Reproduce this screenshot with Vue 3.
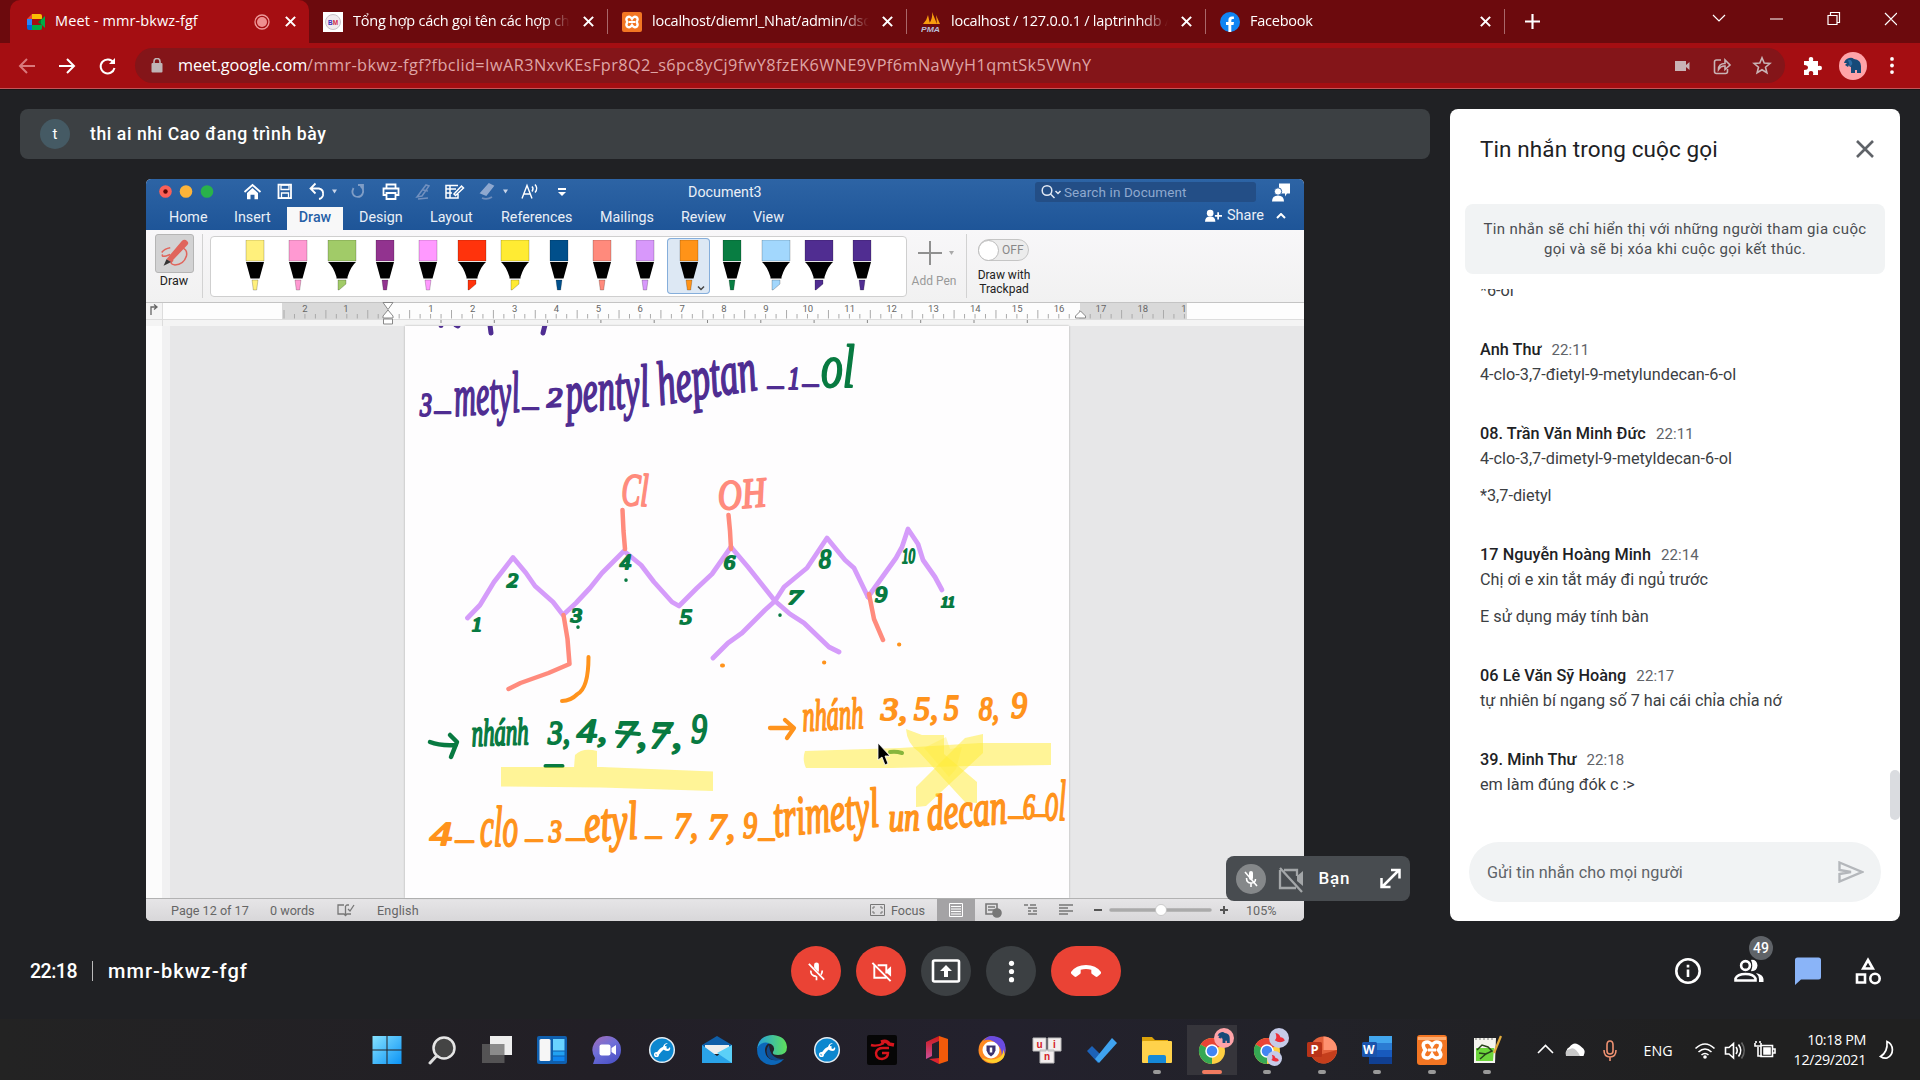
<script setup>
const tabs = [
  { title: 'Tổng hợp cách gọi tên các hợp chất', icon: 'book' },
  { title: 'localhost/diemrl_Nhat/admin/dsd', icon: 'xampp' },
  { title: 'localhost / 127.0.0.1 / laptrinhdb /', icon: 'pma' },
  { title: 'Facebook', icon: 'fb' },
]
const wordTabs = [
  ['Home', 65], ['Insert', 65], ['Draw', 60], ['Design', 71], ['Layout', 71],
  ['References', 99], ['Mailings', 81], ['Review', 72], ['View', 60],
]
const pens = [
  ['#fff07c', 0], ['#ff99d2', 0], ['#a1cb68', 1], ['#92338f', 0], ['#ff99ff', 0],
  ['#ff330c', 1], ['#ffeb33', 1], ['#004f8b', 0], ['#ff8a7c', 0], ['#d898fb', 0],
  ['#ff9318', 0], ['#087d42', 0], ['#a2d7fd', 1], ['#502d91', 1], ['#502d91', 0],
]
const rulerMarks = []
for (let i = 1; i <= 18; i++) rulerMarks.push({ n: i, x: 389 + i * 41.88 })
const ticks = []
for (let i = 0; i < 87; i++) ticks.push({ x: 284 + i * 10.47, big: i % 4 === 0 })
const lowTicks = []
for (let i = 0; i < 12; i++) lowTicks.push(441 + i * 53.3)
const messages = [
  { who: 'Anh Thư', at: '22:11', lines: ['4-clo-3,7-đietyl-9-metylundecan-6-ol'] },
  { who: '08. Trần Văn Minh Đức', at: '22:11', lines: ['4-clo-3,7-dimetyl-9-metyldecan-6-ol', '*3,7-dietyl'] },
  { who: '17 Nguyễn Hoàng Minh', at: '22:14', lines: ['Chị ơi e xin tắt máy đi ngủ trước', 'E sử dụng máy tính bàn'] },
  { who: '06 Lê Văn Sỹ Hoàng', at: '22:17', lines: ['tự nhiên bí ngang số 7 hai cái chỉa chỉa nớ'] },
  { who: '39. Minh Thư', at: '22:18', lines: ['em làm đúng đók c :>'] },
]
/* ink words: text, x, baseline, width, size, angle, colour */
const P = '#4f2d92', G = '#087a41', O = '#ff931c', S = '#ff8b7d'
const ink = [
  ['3', 420, 416, 12, 33, 0, P], ['–', 435, 419, 15, 26, 0, P],
  ['metyl', 455, 416, 66, 58, -4, P], ['–', 523, 415, 15, 26, 0, P],
  ['2', 547, 407, 16, 27, -3, P], ['pentyl', 567, 413, 84, 60, -5, P],
  ['heptan', 660, 405, 100, 62, -9, P], ['–', 768, 394, 15, 26, 0, P],
  ['1', 788, 389, 12, 32, 0, P], ['–', 803, 392, 15, 26, 0, P],
  ['ol', 821, 387, 34, 62, 0, G],
  ['Cl', 621, 505, 27, 46, 2, S], ['OH', 719, 510, 48, 42, -5, S],
  ['1', 472, 631, 10, 19, 0, G], ['2', 507, 587, 11, 19, 0, G], ['3', 571, 622, 11, 18, 0, G],
  ['4', 620, 569, 11, 20, 0, G], ['5', 680, 624, 12, 20, 0, G], ['6', 724, 569, 11, 19, 0, G],
  ['7', 788, 604, 14, 18, 0, G], ['8', 819, 568, 12, 28, 0, G], ['9', 875, 602, 12, 23, 0, G],
  ['10', 902, 563, 13, 22, 0, G], ['11', 941, 607, 14, 15, 0, G],
  ['nhánh', 472, 746, 57, 38, -2, G], ['3,', 548, 744, 22, 33, 0, G], ['4,', 577, 742, 30, 33, 0, G],
  ['7,', 615, 747, 32, 38, 0, G], ['7,', 650, 748, 32, 38, 0, G], ['9', 691, 743, 16, 42, 0, G],
  ['nhánh', 803, 731, 61, 44, -3, O], ['3,', 881, 720, 26, 31, 0, O], ['5,', 914, 720, 24, 34, 0, O],
  ['5', 944, 720, 15, 35, 0, O], ['8,', 979, 720, 20, 33, 0, O], ['9', 1011, 718, 16, 38, 0, O],
  ['4', 430, 845, 22, 34, 0, O], ['–', 456, 848, 17, 26, 0, O], ['clo', 480, 846, 38, 58, 0, O],
  ['–', 526, 847, 16, 26, 0, O], ['3', 549, 842, 13, 31, 0, O], ['–', 567, 846, 17, 26, 0, O],
  ['etyl', 585, 842, 54, 54, -4, O], ['–', 646, 844, 15, 26, 0, O],
  ['7,', 674, 838, 24, 36, 0, O], ['7,', 708, 839, 27, 36, 0, O], ['9', 743, 838, 14, 38, 0, O],
  ['–', 759, 846, 15, 26, 0, O], ['trimetyl', 775, 837, 106, 56, -6, O],
  ['un', 889, 831, 31, 40, -2, O], ['decan', 928, 830, 80, 50, -5, O],
  ['–', 1009, 824, 14, 26, 0, O], ['6', 1023, 819, 12, 35, 0, O], ['–', 1034, 822, 12, 26, 0, O],
  ['ol', 1045, 820, 21, 56, 0, O],
]
</script>

<template>
  <div class="screen">
    <header class="chrome">
      <div class="tabstrip">
        <div class="tab active">
          <svg class="fav" viewBox="0 0 20 20"><path d="M1 7l5-5v5z" fill="#ea4335"/><path d="M6 2h8q2 0 2 2v3H6z" fill="#fbbc04"/><path d="M1 7h5v6H1z" fill="#2684fc"/><path d="M1 13h5v5H3q-2 0-2-2z" fill="#0066da"/><path d="M6 13h10v3q0 2-2 2H6z" fill="#00ac47"/><path d="M12 10l4-3.500v7z" fill="#00832d"/><path d="M15 8l4-4v12l-4-4z" fill="#00ac47"/></svg>
          <span class="ttl first">Meet - mmr-bkwz-fgf</span>
          <svg class="rec" viewBox="0 0 16 16"><circle cx="8" cy="8" r="7" fill="none" stroke="#ee9a9a" stroke-width="1.3"/><circle cx="8" cy="8" r="5" fill="#ee8f90"/></svg>
          <svg class="cls" viewBox="0 0 10 10"><path d="M.8.8l8.4 8.4M9.2.8L.8 9.200" stroke="#fff" stroke-width="1.9"/></svg>
        </div>
        <div v-for="(t, i) in tabs" :key="i" class="tab idle">
          <svg v-if="t.icon === 'book'" class="fav" viewBox="0 0 20 20"><path fill="#fff" d="M0 0h20v20H0z"/><circle cx="10" cy="10" r="7.500" fill="#f1ebee" stroke="#c9c1c8"/><text x="5" y="12.500" font-size="7" font-weight="700" fill="#3b2bbd" font-family="Liberation Sans, sans-serif" textLength="10" lengthAdjust="spacingAndGlyphs">B<tspan fill="#d2264c">M</tspan></text></svg>
          <svg v-else-if="t.icon === 'xampp'" class="fav" viewBox="0 0 20 20"><rect width="20" height="20" rx="2" fill="#f37623"/><path d="M5 5.500q3-2 5 1.500 2-3.500 5-1.500 1.500 2-.5 4.500 2 2.500.5 4.500-3 2-5-1.500-2 3.500-5 1.500-1.500-2 .5-4.500-2-2.500-.5-4.500z" fill="none" stroke="#fff" stroke-width="2.300"/><path d="M7 10h6" stroke="#fff" stroke-width="2"/></svg>
          <svg v-else-if="t.icon === 'pma'" class="fav" viewBox="0 0 20 20"><path d="M2 12Q6 8 7 3l2 9zM8 12Q12 6 11 0l5 12zM15 3l4 9h-3z" fill="#f89c0e"/><text x="0" y="19.500" font-size="8" font-weight="700" font-style="italic" fill="#b8bdd8" font-family="Liberation Sans, sans-serif" textLength="19" lengthAdjust="spacingAndGlyphs">PMA</text></svg>
          <svg v-else class="fav" viewBox="0 0 20 20"><circle cx="10" cy="10" r="10" fill="#1184f2"/><path d="M8.400 20v-7H6v-3h2.400V8q0-3.600 3.500-3.600l2 .2v2.500h-1.200q-1.400 0-1.400 1.400V10H14l-.5 3h-2.200v7z" fill="#fff"/></svg>
          <span class="ttl">{{ t.title }}</span>
          <svg class="cls" viewBox="0 0 10 10"><path d="M.8.8l8.400 8.400M9.200.8L.8 9.200" stroke="#fff" stroke-width="1.900"/></svg>
          <i class="tsep"></i>
        </div>
        <svg class="plus" viewBox="0 0 14 14"><path d="M7 0v14M0 7h14" stroke="#fff" stroke-width="2"/></svg>
        <svg class="wctl" viewBox="0 0 190 30" fill="none" stroke="#fff" stroke-width="1.200"><path d="M6 12l6 6 6-6M63 16h13M121 12.500h9v9h-9zM123.500 12v-2.500h9v10H130M178 10l12 12M190 10l-12 12"/></svg>
      </div>
      <div class="toolbar">
        <svg class="nav" viewBox="0 0 120 24" fill="none" stroke-width="2"><path d="M25 12H10M17 5l-7 7 7 7" stroke="#d9797c"/><path d="M49 12h15M57 5l7 7-7 7" stroke="#fff"/><path d="M103.500 8.500A7 7 0 1 0 104.500 14" stroke="#fff"/><path d="M105 4v6h-6z" fill="#fff"/></svg>
        <div class="omni">
          <svg class="lock" viewBox="0 0 12 15"><rect x=".5" y="5" width="11" height="9.500" rx="1" fill="#c0b4b6"/><path d="M3 6V3.500a3 3 0 0 1 6 0V6" fill="none" stroke="#c0b4b6" stroke-width="1.600"/></svg>
          <span class="url"><b>meet.google.com</b>/mmr-bkwz-fgf?fbclid=IwAR3NxvKEsFpr8Q2_s6pc8yCj9fwY8fzEK6WNE9VPf6mNaWyH1qmtSk5VWnY</span>
          <svg class="omico" viewBox="0 0 110 24"><path d="M4 7h11v10H4zM15 11l3.500-3v8L15 13z" fill="#c9b3b5"/><g fill="none" stroke="#c9b3b5" stroke-width="1.600"><path d="M50 6h-4.500q-2 0-2 2v9.500q0 2 2 2h9q2 0 2-2V15"/><path d="M47.500 15.500q0-6 6.500-6V6l5 5-5 4.500V12q-4-.5-6.500 3.500z"/><path d="M91 3.800l2.200 5.300 5.700.4-4.400 3.700 1.400 5.600-4.900-3-4.900 3 1.400-5.600-4.400-3.700 5.700-.4z"/></g></svg>
        </div>
        <svg class="ext" viewBox="0 0 20 20"><path d="M2 5h5q-1-4 2-4t2 4h5v5q4-1 4 2t-4 2v5h-5q1-4-2-4t-2 4H2v-5q4 0 4-2.500T2 9z" fill="#fff"/></svg>
        <svg class="ava" viewBox="0 0 28 28"><circle cx="14" cy="14" r="14" fill="#ffa3a8"/><path d="M5 11q1-4 5-5 3-1 5 1 7 1 7 7v7h-4v-3h-2v3h-4v-6q-2 0-2-2l-1 2-3-2 2-2z" fill="#164a78"/><path d="M9 8q3-1 4 2t-2 4" fill="#2a6ca3"/></svg>
        <svg class="dots" viewBox="0 0 4 18" fill="#fff"><circle cx="2" cy="2" r="2"/><circle cx="2" cy="9" r="2"/><circle cx="2" cy="16" r="2"/></svg>
      </div>
    </header>

    <main class="meet">
      <section class="stage">
        <div class="presenting"><span class="who">t</span><span>thi ai nhi Cao đang trình bày</span></div>
        <div class="shared">
          <div class="wtop">
            <div class="wtitle">
              <svg class="quick" viewBox="146 179 460 26">
                <circle cx="165.500" cy="191.500" r="6.300" fill="#fb6058"/><circle cx="165.500" cy="191.500" r="2.200" fill="#5c0805"/><circle cx="186" cy="191.500" r="6.300" fill="#fdb43a"/><circle cx="207" cy="191.500" r="6.300" fill="#29b24b"/>
                <g fill="none" stroke="#fff" stroke-width="1.800">
                  <path d="M244.500 192l8-7 8 7"/><path d="M247 193l5.500-5 5.500 5v6.200h-3.500v-4.500h-4v4.500H247z" fill="#fff" stroke="none"/>
                  <path d="M278.500 184.700h12.500v13.500h-12.500z"/><path d="M281 185h8v4.500h-8zM281.500 193h7v5h-7z" stroke-width="1.300"/>
                  <path d="M315.500 183.500l-5 5 5 5M311 188.500h8q5 1 4 7-1 3-4 3.500"/>
                  <path d="M353.500 188q-3 6 2 8.500 5 1.500 7-2.500 2-5-2-8M358 185h5v5" stroke="#7f9dc6"/>
                  <path d="M386.500 188.500v-4h9v4M386 195h-2.500v-6.500h15v6.500H396M386.500 193h9v6h-9z"/>
                  <path d="M417 197l9-12 3 1-7 10zM418 199l10-1M423 190l5 1" stroke="#7190bf" stroke-width="1.500"/>
                  <path d="M458 185.500h-12V198h12v-4M446 189h10M446 193h6M450 186v12M454 194l7.500-8 2 2-8 7.500z" stroke-width="1.500"/>
                  <path d="M481 193l8-9 4 2-7 9z" fill="#8fa8cf" stroke="#8fa8cf"/><path d="M482 198q5 2 10-1" stroke="#6f8dbb"/>
                  <path d="M522 198.500l5-13 5 13M524 194h6.500M532 186.500q2 2 0 5M535 184.500q3.500 4 0 8" stroke-width="1.400"/>
                  <path d="M558 189h8" />
                </g>
                <path d="M332 189.500h5l-2.500 4zM503 189.500h5l-2.500 4z" fill="#c8d5ea"/><path d="M558 192h8l-4 4z" fill="#fff"/>
              </svg>
              <span class="docname">Document3</span>
              <div class="search"><svg viewBox="0 0 22 16" fill="none" stroke="#e2e9f4" stroke-width="1.500"><circle cx="7" cy="6.500" r="4.800"/><path d="M10.500 10l4 4M15.500 7l2.500 2.500L20.500 7"/></svg><span>Search in Document</span></div>
              <svg class="person" viewBox="0 0 18 18" fill="#fff"><path d="M7 0h11v10h-3l-2 3v-3H7z"/><circle cx="6" cy="8" r="3.700" stroke="#2b61a3"/><path d="M0 18q0-6 6-6t6 6z"/></svg>
            </div>
            <nav class="wtabs">
              <span v-for="w in wordTabs" :key="w[0]" :class="{ on: w[0] === 'Draw' }" :style="{ width: w[1] + 'px' }"><em>{{ w[0] }}</em></span>
              <div class="share"><svg viewBox="0 0 18 14" fill="#fff"><circle cx="5.500" cy="4" r="3.500"/><path d="M0 13q0-5.500 5.500-5.500T11 13zM13 3h1.800v3H18v1.800h-3.200v3H13v-3h-2.500V6H13z"/></svg><span>Share</span><svg class="up" viewBox="0 0 10 6"><path d="M1 5l4-4 4 4" fill="none" stroke="#fff" stroke-width="2"/></svg></div>
            </nav>
          </div>
          <div class="ribbon">
            <div class="drawtool"><div class="drawbtn"><svg viewBox="0 0 39 38"><path d="M6 18q3-4 9-5M25 12q9 2 7 10-3 9-12 9-7-1-2-5M7 20q-2 4 8 0" fill="none" stroke="#e0655c" stroke-width="1.600"/><path d="M11 25L27 6q3-3 6 0 2 2 0 4L16 28z" fill="#e0655c"/><path d="M11 25l5 3-8 4z" fill="#333"/></svg></div><span>Draw</span></div>
            <i class="rsep"></i>
            <div class="penbox">
              <div v-for="(p, i) in pens" :key="i" class="pen" :class="{ sel: i === 10 }">
                <svg viewBox="-20 0 40 52">
                  <template v-if="p[1]"><path d="M-14 0h28v21h-28z" :fill="p[0]" stroke="#0003"/><path d="M-14 22h28q-5 4-8.500 15v1.500h-11V37q-3.500-11-8.500-15z"/><path d="M-4 40h8v4l-7 6H-4z" :fill="p[0]" stroke="#0004" stroke-width=".8"/></template>
                  <template v-else><path d="M-9 0H9v21H-9z" :fill="p[0]" stroke="#0003"/><path d="M-9 22H9L4.500 38.500h-9z"/><path d="M-3 40h6L1.700 50h-3.400z" :fill="p[0]" stroke="#0004" stroke-width=".8"/></template>
                  <path v-if="i === 10" d="M9 46.500l3 3 3-3" fill="none" stroke="#444" stroke-width="1.500"/>
                </svg>
              </div>
            </div>
            <div class="addpen"><svg viewBox="0 0 46 26"><path d="M19 1v24M7 13h24" stroke="#909090" stroke-width="2"/><path d="M38 11h5l-2.500 4z" fill="#aaa"/></svg><span>Add Pen</span></div>
            <i class="rsep two"></i>
            <div class="track"><div class="toggle"><b></b><span>OFF</span></div><p>Draw with<br>Trackpad</p></div>
          </div>
          <svg class="ruler" viewBox="146 302 1158 24">
            <path d="M146 302h1158v24H146z" fill="#f4f4f4"/><path d="M162 303h1142v16.500H162z" fill="#fdfdfd"/>
            <path d="M282 303h106v16H282zM1080 303h107v16H1080z" fill="#d9d9d9"/><path d="M146 302.500h1158" stroke="#c4c4c4"/><path d="M146 319.500h1158M162.500 303v23" stroke="#ddd"/>
            <path v-for="(t, i) in ticks" :key="i" :d="`M${t.x} ${t.big ? 310 : 314}V318.500`" stroke="#aaa"/>
            <path v-for="x in lowTicks" :key="x" :d="`M${x} 320v3`" stroke="#888"/>
            <g font-family="Roboto, sans-serif" font-size="9.500" fill="#666" text-anchor="middle"><text x="305" y="311.500">2</text><text x="346" y="311.500">1</text><text v-for="m in rulerMarks" :key="m.n" :x="m.x" y="311.500">{{ m.n }}</text><text x="1184" y="311.500">1</text></g>
            <path d="M151 315v-8h6M154 304.500l3 2.500-3 2.500" fill="none" stroke="#666" stroke-width="1.300"/>
            <path d="M383 302.500h10l-5 7zM383 318v-2l5-6 5 6v2zM383.500 319h9v5h-9zM1075.500 316l5-5 5 5v2h-10z" fill="#fff" stroke="#888"/>
          </svg>
          <div class="canvas">
            <div class="margin"></div>
            <svg class="page" viewBox="405 326 664 572">
              <g fill="none" stroke-linecap="round" stroke-linejoin="round">
                <g stroke="#4f2d92" stroke-width="5"><path d="M441 325v.5M456 325l2 1M490 325l1 8M545 325l-2 8"/></g>
                <g stroke="#d59cfa" stroke-width="4.800">
                  <path d="M467.500 618L480 605 494 582 513 557.500 526 573 535 586 553 602 563 615 576 603 590 588 602 573 624 551 641 565 654 582 672 602 679 606 697 588 712 574 731 547"/>
                  <path d="M731 547l17 20 27 34 9-14 23-19 20-30 18 22 9 8 14 29"/><path d="M868 597l28-39 6-11 6-18 10 15 5 16 12 17 7 13"/>
                  <path d="M775 601l-10 9-23 23-14 10-15 15M775 601l15 13 14 9 25 24 10 5"/>
                </g>
                <g stroke="#ff8b7d" stroke-width="4.500"><path d="M563.500 615l4 24 2 25-21 9-28 10-12 6M622.500 510l1 21 1.500 18M728.500 515l1.500 16 1 18M869 594l5 25 9 21"/></g>
                <path d="M588.500 657q0 31-11 37-7 7-15.500 7" stroke="#ff931c" stroke-width="4"/>
                <g stroke="#087a41" stroke-width="4.500"><path d="M430 742q10 4 26 3M450 735l7 7-6 15"/><path d="M545.500 766h17M617 732l22 2M654 731l15 1" stroke-width="4"/><path d="M578 627v.3M626 580v.3M780 615v.3" stroke-width="3.500"/></g>
                <g stroke="#ff931c" stroke-width="4.300"><path d="M770 728h23M785 720l9 8-7 10"/><path d="M722 665.500h1M824 662.500h.3M899 644.500h.3" stroke-width="4"/></g>
              </g>
              <g font-family="'Liberation Serif', serif" font-style="italic" stroke-linejoin="round" stroke-width="2">
                <text v-for="(w, i) in ink" :key="i" :x="w[1]" :y="w[2]" :textLength="w[3]" lengthAdjust="spacingAndGlyphs" :font-size="w[4]" :transform="`rotate(${w[5]} ${w[1]} ${w[2]})`" :fill="w[6]" :stroke="w[6]">{{ w[0] }}</text>
              </g>
              <path d="M890 752q6-1 12 1" fill="none" stroke="#087a41" stroke-width="4" stroke-linecap="round"/>
              <g fill="#ffec38" fill-opacity=".52">
                <path d="M501 767h100l112 4.500v19.500l-112-3.500-100-1zM575 755q8-8 22-4v17h-23z"/>
                <path d="M805 751l95-3 80-5h71v22l-80 1-80 2h-85q-4-8-1-17z"/>
                <path d="M906 729l16 6h22v19l33 28v21l-12-1-46-50q-12-8-13-23z"/><path d="M983 734l-18 4-49 49v20l10-1 57-53z"/><path d="M924 748l22-11 4 12 12-2-6 22-7 8z" fill-opacity=".3"/>
              </g>
              <path d="M878 743v17l4-3 3 8 3-1.500-3-7.500h5z" fill="#000" stroke="#fff" stroke-width=".8"/>
            </svg>
          </div>
          <div class="status">
            <span class="s1">Page 12 of 17</span><span class="s2">0 words</span>
            <svg class="s3" viewBox="0 0 18 14" fill="none" stroke="#777" stroke-width="1.300"><path d="M7 2H1v9h6l1.500 1.500L10 11h4M8.500 3v9M8.500 3L10 2h2M11 6l2 2 4-6"/></svg>
            <span class="s4">English</span>
            <svg class="s5" viewBox="0 0 15 12" fill="none" stroke="#777"><path d="M.5.5h14v11H.5z"/><path d="M3 5V3h2M10 3h2v2M12 7v2h-2M5 9H3V7"/></svg>
            <span class="s6">Focus</span>
            <div class="s7"><svg viewBox="0 0 14 14"><path d="M.5.500h13v13H.5zM2 3.500h10M2 6h10M2 8.500h10M2 11h10" fill="none" stroke="#fff"/></svg></div>
            <svg class="s8" viewBox="0 0 280 22" fill="none" stroke="#777" stroke-width="1.600"><path d="M11 5h11v10H11zM13 8h7M13 11h7"/><circle cx="22" cy="14" r="4" fill="#777"/><path d="M49 6h4M55 6h6M53 9h9M53 12h3M58 12h4M53 15h9M84 6h14M84 9h9M84 12h14M84 15h9"/><path d="M119 11h8M245 11h8M249 7v8" stroke="#555" stroke-width="2"/><path d="M136 11h99" stroke="#aaa" stroke-width="3.500" stroke-linecap="round"/><circle cx="186" cy="11" r="5.500" fill="#fff" stroke="#bbb" stroke-width=".7"/></svg>
            <span class="s9">105%</span>
          </div>
        </div>
        <div class="selftile">
          <svg viewBox="0 0 184 45"><circle cx="25" cy="23" r="15" fill="#85888a"/><g fill="none" stroke="#fff" stroke-width="1.600"><path d="M25 16v7M20.500 22q0 5 4.500 5t4.500-4M25 27v4M19 16l12 14"/><path d="M25 17v5" stroke-width="4" stroke-linecap="round"/></g><path d="M58 14h13v6M54 12l22 24M70 32H54V14" fill="none" stroke="#a3a6a8" stroke-width="2.300"/><path d="M71 20l6-5v15l-6-5z" fill="#a3a6a8"/><path d="M156 31l17-17M165 14h8.500v8.500M155.500 22v9h9" fill="none" stroke="#fff" stroke-width="2.500"/><text x="92.500" y="27.500" font-family="Roboto, sans-serif" font-size="17" font-weight="500" fill="#fff" textLength="31">Bạn</text></svg>
        </div>
      </section>

      <aside class="panel">
        <div class="phead"><h2>Tin nhắn trong cuộc gọi</h2><svg viewBox="0 0 18 18"><path d="M1 1l16 16M17 1L1 17" stroke="#5f6368" stroke-width="2.600"/></svg></div>
        <p class="notice">Tin nhắn sẽ chỉ hiển thị với những người tham gia cuộc<br>gọi và sẽ bị xóa khi cuộc gọi kết thúc.</p>
        <div class="list">
          <p class="cut">*6-ol</p>
          <div v-for="m in messages" :key="m.who" class="msg">
            <div class="mh"><b>{{ m.who }}</b><time>{{ m.at }}</time></div>
            <p v-for="l in m.lines" :key="l">{{ l }}</p>
          </div>
          <i class="thumb"></i>
        </div>
        <div class="compose"><span>Gửi tin nhắn cho mọi người</span><svg viewBox="0 0 26 22"><path d="M1.500 1.500L24 11 1.500 20.500V13L13 11 1.500 9z" fill="none" stroke="#b4b7bb" stroke-width="2.400"/></svg></div>
      </aside>
    </main>

    <footer class="controls">
      <div class="code"><span class="clk">22:18</span><i></i><span class="room">mmr-bkwz-fgf</span></div>
      <div class="btns">
        <div class="rb red"><svg viewBox="0 0 24 24" fill="none" stroke="#fff" stroke-width="1.800"><path d="M12 5v6" stroke-width="5" stroke-linecap="round"/><path d="M6 11q0 6 6 6t6-6M12 17v4"/><path d="M4.500 5.500l14 15" stroke="#ea4335" stroke-width="4"/><path d="M4 4l16 16.500"/></svg></div>
        <div class="rb red"><svg viewBox="0 0 24 24" fill="none" stroke="#fff" stroke-width="2"><path d="M8 5.500h9V14M17 18.500H4.500v-13M2.500 3l19 19"/><path d="M17 11l5-4.500v11L17 13z" fill="#fff" stroke="none"/></svg></div>
        <div class="rb"><svg class="wide" viewBox="0 0 30 24"><rect x="2" y="1.500" width="26" height="21" rx="1.500" fill="none" stroke="#fff" stroke-width="2.600"/><path d="M15 6l6 6h-4v6h-4v-6H9z" fill="#fff"/></svg></div>
        <div class="rb"><svg viewBox="0 0 24 24" fill="#fff"><circle cx="12" cy="3.500" r="2.700"/><circle cx="12" cy="12" r="2.700"/><circle cx="12" cy="20.500" r="2.700"/></svg></div>
        <div class="rb red hang"><svg class="wide" viewBox="0 0 30 12"><path d="M0 7Q5 0 15 0t15 7q.5 1-.5 2L26.500 11.500q-1 .8-2 0L21 9q-.7-.5-.7-1.500V4.800q-5.300-1.600-10.600 0v2.700Q9.700 8.500 9 9l-3.500 2.500q-1 .8-2 0L.5 9Q-.3 8 0 7z" fill="#fff"/></svg></div>
      </div>
      <div class="acts">
        <svg viewBox="0 0 28 28"><circle cx="14" cy="14" r="11.700" fill="none" stroke="#fff" stroke-width="2.600"/><path d="M12.700 12.500h2.600V20h-2.600zM12.700 7.800h2.600v2.600h-2.600z" fill="#fff"/></svg>
        <div class="ppl"><svg viewBox="0 0 30 26"><circle cx="11.500" cy="7.500" r="4.400" fill="none" stroke="#fff" stroke-width="2.600"/><path d="M1.500 22.500v-2q2-4.500 10-4.500t10 4.500v2z" fill="none" stroke="#fff" stroke-width="2.600"/><path d="M17 1.900q6-.5 6.500 5.600-.5 6-6.500 5.600 2.500-5.600 0-11.200zM22 15q7 1.500 7.500 6v3h-4.500v-3q-.5-4-3-6z" fill="#fff"/></svg><span>49</span></div>
        <svg viewBox="0 0 28 28"><path d="M3.500.5h21q2.500 0 2.500 2.500v17q0 2.500-2.500 2.500H7l-6 5.500V3Q1 .5 3.500.5z" fill="#8ab4f8"/></svg>
        <svg viewBox="0 0 28 28" fill="none" stroke="#fff" stroke-width="2.600"><path d="M14 3l4.800 8.500H9.200zM3 17.500h8v8H3z"/><circle cx="21" cy="21.500" r="4.700"/></svg>
      </div>
    </footer>

    <div class="taskbar">
      <div class="apps">
        <div class="app"><svg viewBox="0 0 30 30"><defs><linearGradient id="wg" x2="1" y2="1"><stop stop-color="#86e2ff"/><stop offset="1" stop-color="#0b93f5"/></linearGradient></defs><path d="M.5 1h14v13.500H.500zM15.500 1h14v13.500h-14zM.5 15.500h14V29H.5zM15.500 15.500h14V29h-14z" fill="url(#wg)"/></svg></div>
        <div class="app"><svg viewBox="0 0 30 30"><circle cx="17" cy="13" r="10.500" fill="#444" stroke="#e6e6e6" stroke-width="2.500"/><path d="M9.500 21L3 28" stroke="#ddd" stroke-width="3" stroke-linecap="round"/></svg></div>
        <div class="app"><svg viewBox="0 0 30 30"><path d="M8 1h22v19H8z" fill="#eee"/><path d="M0 9h22.500v19H0z" fill="#666b"/></svg></div>
        <div class="app"><svg viewBox="0 0 30 30"><rect y="1" width="30" height="28" rx="2" fill="#0f5fae"/><rect x="2.500" y="4" width="11" height="22" rx="1.500" fill="#f6f6f6"/><path d="M16 4h11.500v11.500H16z" fill="#69d3ff"/><path d="M16 16.500h11.500v4H16z" fill="#22a2f2"/><path d="M16 21.500h11.500v4.500H16z" fill="#0f85ef"/></svg></div>
        <div class="app"><svg viewBox="0 0 30 30"><defs><linearGradient id="tg" x2=".6" y2="1"><stop stop-color="#a66bb5"/><stop offset=".5" stop-color="#6f6fd8"/><stop offset="1" stop-color="#4f55c8"/></linearGradient></defs><path d="M15 1a14 14 0 0 1 0 28H1l2-6A14 14 0 0 1 15 1z" fill="url(#tg)"/><rect x="7.500" y="9.500" width="11" height="11" rx="2" fill="#fff"/><path d="M19.500 13l4.500-3v10l-4.500-3z" fill="#fff"/></svg></div>
        <div class="app"><svg viewBox="0 0 30 30"><circle cx="15" cy="15" r="12.300" fill="#0c87cf" stroke="#e4edf3" stroke-width="1.500"/><path d="M9.500 19.500q2-1 3-3 3-4 7-4" stroke="#fff" stroke-width="3" fill="none"/><circle cx="9.500" cy="19.500" r="1.800" stroke="#fff" fill="none" stroke-width="1.500"/><path d="M21 8l-3 2v3l3 1 2-2q1 3-2 4-5 0-5-4 1-4 5-4z" fill="#fff"/></svg></div>
        <div class="app"><svg viewBox="0 0 30 30"><path d="M0 10L15 1l15 9v6H0z" fill="#0f5ea8"/><path d="M3 10h24v9H3z" fill="#eee"/><path d="M0 10l15 11L30 10v18H0z" fill="#2aa3e8"/><path d="M30 10v18L15 18z" fill="#5bd0f8"/></svg></div>
        <div class="app"><svg viewBox="0 0 30 30"><defs><linearGradient id="eg" x2="1"><stop stop-color="#249fdf"/><stop offset="1" stop-color="#5fe05a"/></linearGradient></defs><path d="M0 14Q2 0 16 0q13 1 14 12 0 8-9 8-6 0-5-3 3-5-2-8Q6 6 0 14z" fill="url(#eg)"/><path d="M0 14q3-8 12-6-6 4-3 12 4 8 18 4-5 6-13 6Q0 28 0 14z" fill="#0c67b9"/><path d="M12 10q-5 6 0 13 5 4 14 1-13 0-14-14z" fill="#114a8b"/></svg></div>
        <div class="app"><svg viewBox="0 0 30 30"><circle cx="15" cy="15" r="12.300" fill="#0c87cf" stroke="#e4edf3" stroke-width="1.500"/><path d="M9.500 19.500q2-1 3-3 3-4 7-4" stroke="#fff" stroke-width="3" fill="none"/><circle cx="9.500" cy="19.500" r="1.800" stroke="#fff" fill="none" stroke-width="1.500"/><path d="M21 8l-3 2v3l3 1 2-2q1 3-2 4-5 0-5-4 1-4 5-4z" fill="#fff"/></svg></div>
        <div class="app"><svg viewBox="0 0 30 30"><rect width="30" height="30" rx="2" fill="#060606"/><g fill="none" stroke="#d8151d" stroke-width="2.400"><path d="M4 10q6 2 13-2M22 13h-6q-6 0-7 5 0 6 6 6 6-1 6-6h-6"/><path d="M14 7q6-2 8 2l5 1" stroke-width="3.500"/></g></svg></div>
        <div class="app"><svg viewBox="0 0 30 30"><defs><linearGradient id="og" x2="0" y2="1"><stop stop-color="#d01818"/><stop offset="1" stop-color="#c9509a"/></linearGradient></defs><path d="M4 7l13-6v5l-7 3v12l-6 3z" fill="url(#og)"/><path d="M17 1l9 3v22l-9 3z" fill="#f25a0a"/><path d="M7 24l10-1v6z" fill="#dc2430"/></svg></div>
        <div class="app"><svg viewBox="0 0 30 30"><circle cx="15" cy="15" r="13.500" fill="#ff8a22"/><path d="M14 1q15 0 14.500 14-1 6-4 8 2-12-11-18-4-1-7 1Q10 1 14 1z" fill="#6a4be0"/><path d="M5 23q10 3 16 0 6-3 5-9 4 8-3 12-9 5-18-3z" fill="#ffcf2c"/><circle cx="14" cy="15" r="8.500" fill="#fff"/><path d="M9.500 10.500h9v5q-1 4-4.500 6-3.500-2-4.500-6z" fill="#3d326e"/><path d="M14 12.500v5" stroke="#fff" stroke-width="2.500"/></svg></div>
        <div class="app"><svg viewBox="0 0 30 30"><path d="M1 3h13v13H1zM16 3h13v13H16zM8 15h14v13H8z" fill="#f3eeee" stroke="#bbb"/><g font-family="Liberation Sans, sans-serif" font-weight="700" font-size="10" fill="#d5201f"><text x="4.500" y="13">u</text><text x="21" y="13">i</text><text x="12" y="25">n</text></g></svg></div>
        <div class="app"><svg viewBox="0 0 30 30"><path d="M0 16l5-5 9 9-3 8z" fill="#1c62b8"/><path d="M8 24L25 3l5 5-18 20z" fill="#3fa3f0"/></svg></div>
        <div class="app run"><svg viewBox="0 0 30 30"><path d="M0 2h10l3 3h13v4H0z" fill="#dba20a"/><rect y="6" width="30" height="22" rx="1" fill="#ffd24b"/><path d="M6 28v-6q0-2 2-2h14q2 0 2 2v6z" fill="#1589d8"/></svg></div>
        <div class="app on run"><svg viewBox="0 0 30 30"><circle cx="15" cy="16" r="13" fill="#ffd042"/><path d="M15 16L3.700 9.500A13 13 0 0 1 26.300 9.500z" fill="#e94335"/><path d="M15 16v13A13 13 0 0 1 3.700 9.500z" fill="#35a853"/><circle cx="15" cy="16" r="6" fill="#4285f4" stroke="#fff" stroke-width="1.500"/></svg><svg class="mini" viewBox="0 0 28 28"><circle cx="14" cy="14" r="14" fill="#ffa3a8"/><path d="M5 11q1-4 5-5 3-1 5 1 7 1 7 7v7h-4v-3h-2v3h-4v-6q-2 0-2-2l-1 2-3-2 2-2z" fill="#164a78"/></svg></div>
        <div class="app run"><svg viewBox="0 0 30 30"><circle cx="15" cy="16" r="13" fill="#ffd042"/><path d="M15 16L3.700 9.500A13 13 0 0 1 26.300 9.500z" fill="#e94335"/><path d="M15 16v13A13 13 0 0 1 3.700 9.500z" fill="#35a853"/><circle cx="15" cy="16" r="6" fill="#4285f4" stroke="#fff" stroke-width="1.500"/></svg><svg class="mini" viewBox="0 0 28 28"><circle cx="14" cy="14" r="14" fill="#c5cbe8"/><path d="M9 7q6 1 7 6 5 0 6 5-7 4-14-1 4-3 1-10z" fill="#ee2f3a"/></svg><svg class="mini low" viewBox="0 0 28 28"><circle cx="14" cy="14" r="14" fill="#c5cbe8"/><path d="M9 7q6 1 7 6 5 0 6 5-7 4-14-1 4-3 1-10z" fill="#ee2f3a"/></svg></div>
        <div class="app run"><svg viewBox="0 0 30 30"><circle cx="16.500" cy="15" r="13.500" fill="#e3613b"/><path d="M16.500 1.500A13.500 13.500 0 0 1 30 15H16.500z" fill="#ff9270"/><path d="M30 15a13.500 13.500 0 0 1-25 7z" fill="#c43e1c"/><rect y="7" width="15" height="15" rx="1.500" fill="#b83318"/><text x="3.500" y="19" font-family="Open Sans, sans-serif" font-weight="700" font-size="13" fill="#fff">P</text></svg></div>
        <div class="app run"><svg viewBox="0 0 30 30"><path d="M7 1h23v8H7z" fill="#42a6ee"/><path d="M7 8h23v7H7z" fill="#2b7cd3"/><path d="M7 15h23v7H7z" fill="#185abd"/><path d="M7 22h23v7H7z" fill="#103f91"/><rect y="7" width="15" height="15" rx="1.500" fill="#1a54ad"/><text x="1" y="19" font-family="Open Sans, sans-serif" font-weight="700" font-size="12" textLength="13" fill="#fff">W</text></svg></div>
        <div class="app run"><svg viewBox="0 0 30 30"><rect y="0" width="30" height="30" rx="3" fill="#f37623"/><path d="M1 2h28v3H1z" fill="#ffad70"/><path d="M7 8q5-3 8 2.500Q18 5 23 8q2 3-1.500 7 3.500 4 1.500 7-5 3-8-2.500Q12 25 7 22q-2-3 1.500-7Q5 11 7 8z" fill="none" stroke="#fff" stroke-width="3.600"/><path d="M11 15h8" stroke="#fff" stroke-width="3"/></svg></div>
        <div class="app run"><svg viewBox="0 0 30 30"><path d="M2 3h22l-1 25H2z" fill="#f4f4ee"/><path d="M4 13h18l-1 13H4z" fill="#6cd63b"/><path d="M5 15l5-5 6 2 4 4-6 3-7-1M8 24l7-6" stroke="#27431b" stroke-width="1.500" fill="none"/><path d="M4 3v2M8 3v2M12 3v2M16 3v2M20 3v2" stroke="#777"/><path d="M29 1l-7 17" stroke="#e2ab3c" stroke-width="2.300"/></svg></div>
      </div>
      <svg class="tray" viewBox="1530 1030 265 40" fill="none" stroke="#fff" stroke-width="1.600">
        <path d="M1538 1053l7.500-7.500 7.500 7.500"/><path d="M1569 1056a5 5 0 0 1 .5-9q5-7 12 0 5 3 2 9z" fill="#fff" stroke="none"/><path d="M1566 1056q-2-6 4-7 5-3 10 7z" fill="#c8c8c8" stroke="none"/>
        <path d="M1610 1041q-3 0-3 4v6q0 3 3 3t3-3v-6q0-4-3-4zM1604 1050q0 7 6 7t6-7M1610 1057v4" stroke="#ef9272"/>
        <text x="1643.500" y="1055.500" font-family="Open Sans, sans-serif" font-size="15" textLength="29" lengthAdjust="spacingAndGlyphs" fill="#fff" stroke="none">ENG</text>
        <path d="M1695.500 1048.500q9.500-9 19 0M1698.500 1052q6.500-6 13 0M1701.500 1055q3.500-3 7 0"/><circle cx="1705" cy="1057" r="1.800" fill="#fff" stroke="none"/>
        <path d="M1725.500 1047.500h3.500l4.500-4v14.500l-4.500-4h-3.500zM1736 1047q2.500 3.500 0 7M1738.500 1044.500q4.500 6 0 12"/><path d="M1741.500 1042.500q5.500 8 0 16" stroke="#666"/>
        <path d="M1761 1045.500h11.500v11H1761zM1773 1049h2v4h-2M1755 1043v3h6v-3M1756 1041v2M1760 1041v2M1758 1047v9h4"/><path d="M1764 1048h6v6h-6z" fill="#fff"/>
      </svg>
      <div class="time"><span>10:18 PM</span><span>12/29/2021</span></div>
      <svg class="moon" viewBox="0 0 18 20"><path d="M9 1.500a9 9 0 0 1 0 16.500q-3 .8-6.500-1.500Q10 12 9 1.500z" fill="none" stroke="#fff" stroke-width="1.700"/></svg>
    </div>
  </div>
</template>

<style>
html, body { margin: 0; background: #202124; }
</style>
<style scoped>
* { box-sizing: border-box; }
svg { display: block; flex: none; }
p, h2 { margin: 0; font-weight: 400; }
.screen { width: 1920px; height: 1080px; overflow: hidden; background: #202124; display: flex; flex-direction: column; font-family: Roboto, sans-serif; }
.chrome { height: 90px; background: #a50e12; border-bottom: 1px solid #1b1415; box-shadow: inset 0 -1px #c35559; font-family: "Open Sans", "Noto Sans", sans-serif; }
.tabstrip { height: 43px; background: #6c0a0d; display: flex; align-items: center; padding-left: 10px; }
.tab { height: 43px; display: flex; align-items: center; position: relative; width: 299px; padding-left: 14px; }
.tab.active { background: #a50e12; border-radius: 10px 10px 0 0; padding-left: 16px; }
.fav { width: 20px; height: 20px; }
.ttl { margin-left: 10px; width: 221px; color: #fff; font-size: 14.5px; letter-spacing: -.24px; white-space: nowrap; overflow: hidden; margin-top: -2px; mask-image: linear-gradient(90deg, #000 190px, transparent 217px); }
.ttl.first { width: 199px; margin-left: 9px; letter-spacing: .1px; mask-image: none; }
.rec { width: 16px; height: 16px; }
.active .cls { margin-left: 15px; }
.cls { width: 11px; height: 11px; margin-left: 10px; }
.tsep { margin-left: 13px; width: 1px; height: 25px; background: #a9686a; }
.plus { width: 15px; height: 15px; margin-left: 20px; }
.wctl { width: 190px; height: 30px; margin-left: 167px; margin-top: -7px; }
.toolbar { height: 45px; display: flex; align-items: center; padding-left: 10px; }
.nav { width: 120px; height: 24px; margin-right: 5px; }
.omni { width: 1650px; height: 35px; border-radius: 18px; background: #841519; display: flex; align-items: center; padding-left: 16px; }
.lock { width: 12px; height: 15px; }
.url { margin-left: 15px; width: 1493px; font-size: 16.3px; letter-spacing: .4px; color: #dfa5a6; white-space: nowrap; margin-top: -2px; }
.url b { font-weight: 400; color: #fff; letter-spacing: -.12px; }
.omico { width: 110px; height: 24px; }
.ext { width: 20px; height: 20px; margin-left: 17px; }
.ava { width: 28px; height: 28px; margin-left: 17px; }
.dots { width: 4px; height: 17px; margin-left: 23px; }

.meet { height: 831px; padding: 19px 20px 0; display: flex; justify-content: space-between; }
.stage { width: 1410px; position: relative; display: flex; flex-direction: column; }
.presenting { height: 50px; border-radius: 8px; background: #3c4043; display: flex; align-items: center; gap: 20px; padding-left: 20px; color: #fff; font-weight: 500; font-size: 17.6px; letter-spacing: .58px; }
.who { width: 30px; height: 30px; border-radius: 50%; background: #455a64; display: flex; align-items: center; justify-content: center; font-size: 15px; font-weight: 400; letter-spacing: 0; }
.shared { width: 1158px; height: 742px; margin: 20px 0 0 126px; border-radius: 5px; overflow: hidden; background: #f4f4f4; }
.wtop { height: 51px; background: linear-gradient(#2d64a5, #1e5598); color: #e9eff7; font-size: 14.3px; }
.wtitle { height: 26px; display: flex; align-items: center; }
.quick { width: 460px; height: 26px; }
.docname { width: 240px; margin-left: 82px; letter-spacing: 0; }
.search { width: 221px; height: 20px; margin-left: 107px; border-radius: 3px; background: #234e86; display: flex; align-items: center; color: #8fa9cf; font-size: 13.5px; letter-spacing: .1px; }
.search svg { width: 22px; height: 16px; margin: 0 2px 0 5px; }
.person { width: 18px; height: 19px; margin-left: 16px; }
.wtabs { height: 25px; display: flex; padding-left: 23px; align-items: flex-end; }
.wtabs > span { height: 23px; line-height: 20px; display: block; }
.wtabs em { font-style: normal; display: inline-block; height: 23px; }
.wtabs .on em { background: #f8f8f8; color: #2760a6; font-weight: 500; margin-left: -12px; width: 56px; text-align: center; }
.share { display: flex; align-items: center; height: 27px; margin-left: 392px; gap: 5px; font-size: 14.500px; margin-bottom: 1px; }
.wtabs .share svg { width: 17px; height: 14px; }
.wtabs .share .up { width: 10px; height: 6px; margin-left: 7px; }
.ribbon { height: 72px; background: linear-gradient(#f8f7f9, #f1f1f1); display: flex; font-size: 12.500px; color: #222; }
.drawtool { width: 40px; margin: 4px 0 0 8px; display: flex; flex-direction: column; align-items: center; }
.drawbtn { width: 39px; height: 39px; border: 1px solid #b5b5b5; border-radius: 3px; background: #d2d2d3; }
.drawbtn svg { width: 37px; height: 37px; }
.rsep { width: 1px; height: 64px; margin: 4px 7px 0 8px; background: #d2d2d2; }
.penbox { width: 697px; height: 61px; margin-top: 6px; border: 1px solid #cfcfcf; border-radius: 4px; background: #fff; display: flex; padding-left: 22px; }
.pen { width: 43.420px; height: 56px; margin-top: 1px; padding-top: 2px; display: flex; justify-content: center; }
.pen svg { width: 40px; height: 52px; }
.pen.sel { background: #dde8f4; box-shadow: inset 0 0 0 1px #85aedb; border-radius: 4px; }
.addpen { width: 46px; margin: 10px 0 0 4px; color: #999; text-align: center; white-space: nowrap; font-size: 12px; }
.addpen svg { width: 46px; height: 26px; margin-bottom: 8px; }
.addpen span { display: block; line-height: 14px; }
.rsep.two { margin: 4px 12px 0 9px; }
.track { margin-top: 9px; }
.toggle { width: 51px; height: 22px; border: 1px solid #c5c5c5; border-radius: 11px; background: #ececec; display: flex; align-items: center; color: #888; font-size: 12px; gap: 3px; margin-left: -1px; }
.toggle b { width: 21px; height: 21px; border-radius: 50%; background: #fff; border: 1px solid #bbb; margin-left: -1px; }
.track p { margin: 8px 0 0 -2px; line-height: 13.500px; text-align: center; font-size: 12px; white-space: nowrap; width: 54px; }
.ruler { width: 1158px; height: 24px; }
.canvas { height: 572px; background: #e7e7e8; display: flex; }
.margin { width: 24px; background: linear-gradient(90deg, #fcfcfc 16px, #f1f1f2 16px); margin-right: 235px; }
.page { width: 664px; height: 572px; background: #fefdfe; box-shadow: 0 0 2px #aaa; }
.status { height: 23px; border-top: 1px solid #b2b2b2; background: linear-gradient(#e6e5e7, #d8d7d9); display: flex; align-items: center; font-size: 12.600px; color: #666; white-space: nowrap; }
.s1 { margin-left: 25px; width: 99px; } .s2 { width: 67px; } .s3 { width: 18px; height: 14px; } .s4 { width: 493px; margin-left: 22px; letter-spacing: .15px; }
.s5 { width: 15px; height: 12px; } .s6 { margin-left: 6px; width: 46px; }
.s7 { width: 38px; height: 22px; background: #a4a3a5; display: flex; align-items: center; justify-content: center; }
.s7 svg { width: 14px; height: 14px; }
.s8 { width: 280px; height: 22px; margin-right: -9px; }
.selftile { position: absolute; left: 1206px; top: 747px; width: 184px; height: 45px; border-radius: 8px; background: #484c50; }

.panel { width: 450px; height: 812px; background: #fff; border-radius: 8px; display: flex; flex-direction: column; color: #202124; }
.phead { height: 95px; padding: 0 26px 15px 30px; display: flex; align-items: center; justify-content: space-between; }
.phead h2 { font-size: 22.500px; letter-spacing: .1px; color: #202124; margin-top: -1px; }
.phead svg { width: 18px; height: 18px; }
.notice { width: 420px; height: 70px; margin: 0 15px; padding-top: 15px; border-radius: 8px; background: #f1f3f4; text-align: center; font-size: 15px; line-height: 20px; letter-spacing: .38px; color: #4a4d51; white-space: nowrap; }
.list { position: relative; height: 538px; margin-top: 15px; overflow: hidden; padding-left: 30px; font-size: 16.240px; color: #3c4043; }
.cut { height: 57px; margin-top: -9px; line-height: 22px; }
.msg { padding-bottom: 33.8px; line-height: 25px; }
.msg p { height: 25px; }
.msg p + p { margin-top: 12.400px; }
.mh { display: flex; align-items: baseline; height: 25px; gap: 10px; white-space: nowrap; }
.mh b { font-weight: 500; color: #202124; letter-spacing: .05px; }
.mh time { font-size: 15px; color: #5f6368; letter-spacing: .1px; }
.thumb { position: absolute; right: 0; top: 481px; width: 10px; height: 50px; border-radius: 5px; background: #dadce0; }
.compose { width: 412px; height: 60px; margin: 15px 0 0 19px; border-radius: 30px; background: #f1f3f4; display: flex; align-items: center; justify-content: space-between; padding: 0 17px 0 18px; font-size: 16.200px; letter-spacing: .07px; color: #5f6368; }
.compose svg { width: 26px; height: 22px; }

.controls { height: 98px; display: flex; align-items: center; padding-top: 2px; color: #fff; }
.code { width: 791px; padding-left: 30px; display: flex; align-items: center; font-size: 19.500px; font-weight: 500; }
.code i { width: 1px; height: 20px; background: #bbb; margin: 0 15px; }
.clk { width: 47px; letter-spacing: -.5px; } .room { font-size: 20px; letter-spacing: 1.050px; }
.btns { display: flex; gap: 15px; }
.rb { width: 50px; height: 50px; border-radius: 25px; background: #3c4043; display: flex; align-items: center; justify-content: center; }
.red { background: #ea4335; }
.rb svg { width: 23px; height: 23px; }
.rb svg.wide { width: 30px; height: 24px; }
.hang { width: 70px; } .hang svg.wide { height: 12px; }
.acts { display: flex; gap: 32px; align-items: center; margin-left: 553px; }
.acts > svg { width: 28px; height: 28px; }
.ppl { width: 28px; position: relative; } .ppl svg { width: 30px; height: 26px; }
.ppl span { position: absolute; left: 15px; top: -22px; width: 24px; height: 24px; border-radius: 50%; background: #5f6368; font-size: 14px; font-weight: 500; display: flex; align-items: center; justify-content: center; }

.taskbar { height: 61px; background: linear-gradient(90deg, #232323, #221f26 600px, #23212d 1000px, #222229 1300px, #202020 1700px); display: flex; align-items: center; padding-left: 359px; }
.apps { display: flex; }
.app { width: 55px; height: 61px; display: flex; align-items: center; justify-content: center; position: relative; }
.app > svg { width: 30px; height: 30px; }
.app.on { background: linear-gradient(#36353b, #36353b) center / 50px 50px no-repeat; }
.app > .mini { position: absolute; width: 20px; height: 20px; left: 30px; top: 9px; }
.app > .low { top: 32px; width: 15px; height: 15px; left: 28px; }
.run::after { content: ""; position: absolute; bottom: 6px; left: 24px; width: 8px; height: 4px; border-radius: 2px; background: #999; }
.on.run::after { width: 20px; left: 18px; background: #f17b60; }
.tray { width: 265px; height: 40px; margin-left: 16px; }
.time { width: 84px; margin-left: -13px; display: flex; flex-direction: column; align-items: flex-end; color: #fff; font: 14.300px/20px "Open Sans", sans-serif; letter-spacing: -.35px; }
.moon { width: 18px; height: 20px; margin-left: 12px; }
</style>
